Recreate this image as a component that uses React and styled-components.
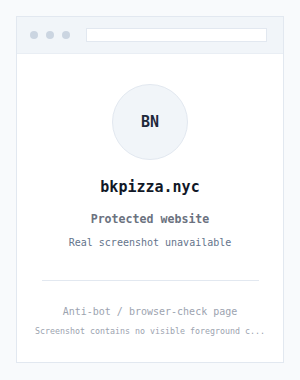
import React from 'react'
import styled, { createGlobalStyle } from 'styled-components'

const Global = createGlobalStyle`
  html, body {
    margin: 0;
    padding: 0;
    background: #f8fafc;
  }
  body {
    font-family: "DejaVu Sans Mono", "Liberation Mono", monospace;
  }
`;

const Page = styled.div`
  padding: 16px;
  width: 300px;
  height: 380px;
  box-sizing: border-box;
`;

const Card = styled.div`
  width: 268px;
  height: 347px;
  box-sizing: border-box;
  background: #ffffff;
  border: 1px solid #e2e8f0;
  display: flex;
  flex-direction: column;
`;

const Toolbar = styled.div`
  height: 37px;
  box-sizing: border-box;
  background: #f1f5f9;
  border-bottom: 1px solid #e9eef4;
  display: flex;
  align-items: center;
  padding: 0 16px 0 13px;
  gap: 8px;
`;

const Dot = styled.span`
  width: 8px;
  height: 8px;
  border-radius: 50%;
  background: #cbd5e1;
  flex: none;
`;

const AddressBar = styled.div`
  flex: 1;
  height: 14px;
  margin-left: 8px;
  background: #ffffff;
  border: 1px solid #e2e8f0;
  box-sizing: border-box;
`;

const Body = styled.div`
  display: flex;
  flex-direction: column;
  align-items: center;
  padding-top: 30px;
`;

const Avatar = styled.div`
  width: 76px;
  height: 76px;
  border-radius: 50%;
  box-sizing: border-box;
  background: #f1f5f9;
  border: 1px solid #e2e8f0;
  display: flex;
  align-items: center;
  justify-content: center;
  font-size: 15px;
  font-weight: 700;
  color: #1e293b;
`;

const Domain = styled.div`
  margin-top: 18px;
  font-size: 15px;
  line-height: 18px;
  font-weight: 700;
  color: #111827;
`;

const Status = styled.div`
  margin-top: 16px;
  font-size: 11.6px;
  line-height: 14px;
  font-weight: 700;
  color: #6b7280;
`;

const Note = styled.div`
  margin-top: ${({ $gap }) => $gap}px;
  font-size: ${({ $size }) => $size}px;
  line-height: ${({ $lh }) => $lh}px;
  color: ${({ $color }) => $color};
  white-space: nowrap;
`;

const Divider = styled.div`
  width: 217px;
  height: 1px;
  background: #e2e8f0;
  margin-top: 31px;
`;

export default function App() {
  return (
    <>
      <Global />
      <Page>
        <Card>
          <Toolbar>
            <Dot />
            <Dot />
            <Dot />
            <AddressBar />
          </Toolbar>
          <Body>
            <Avatar>BN</Avatar>
            <Domain>bkpizza.nyc</Domain>
            <Status>Protected website</Status>
            <Note $gap={10} $size={10} $lh={13} $color="#64748b">Real screenshot unavailable</Note>
            <Divider />
            <Note $gap={24} $size={10} $lh={13} $color="#9ca3af">Anti-bot / browser-check page</Note>
            <Note $gap={8} $size={8.3} $lh={11} $color="#9ca3af">Screenshot contains no visible foreground c...</Note>
          </Body>
        </Card>
      </Page>
    </>
  )
}
